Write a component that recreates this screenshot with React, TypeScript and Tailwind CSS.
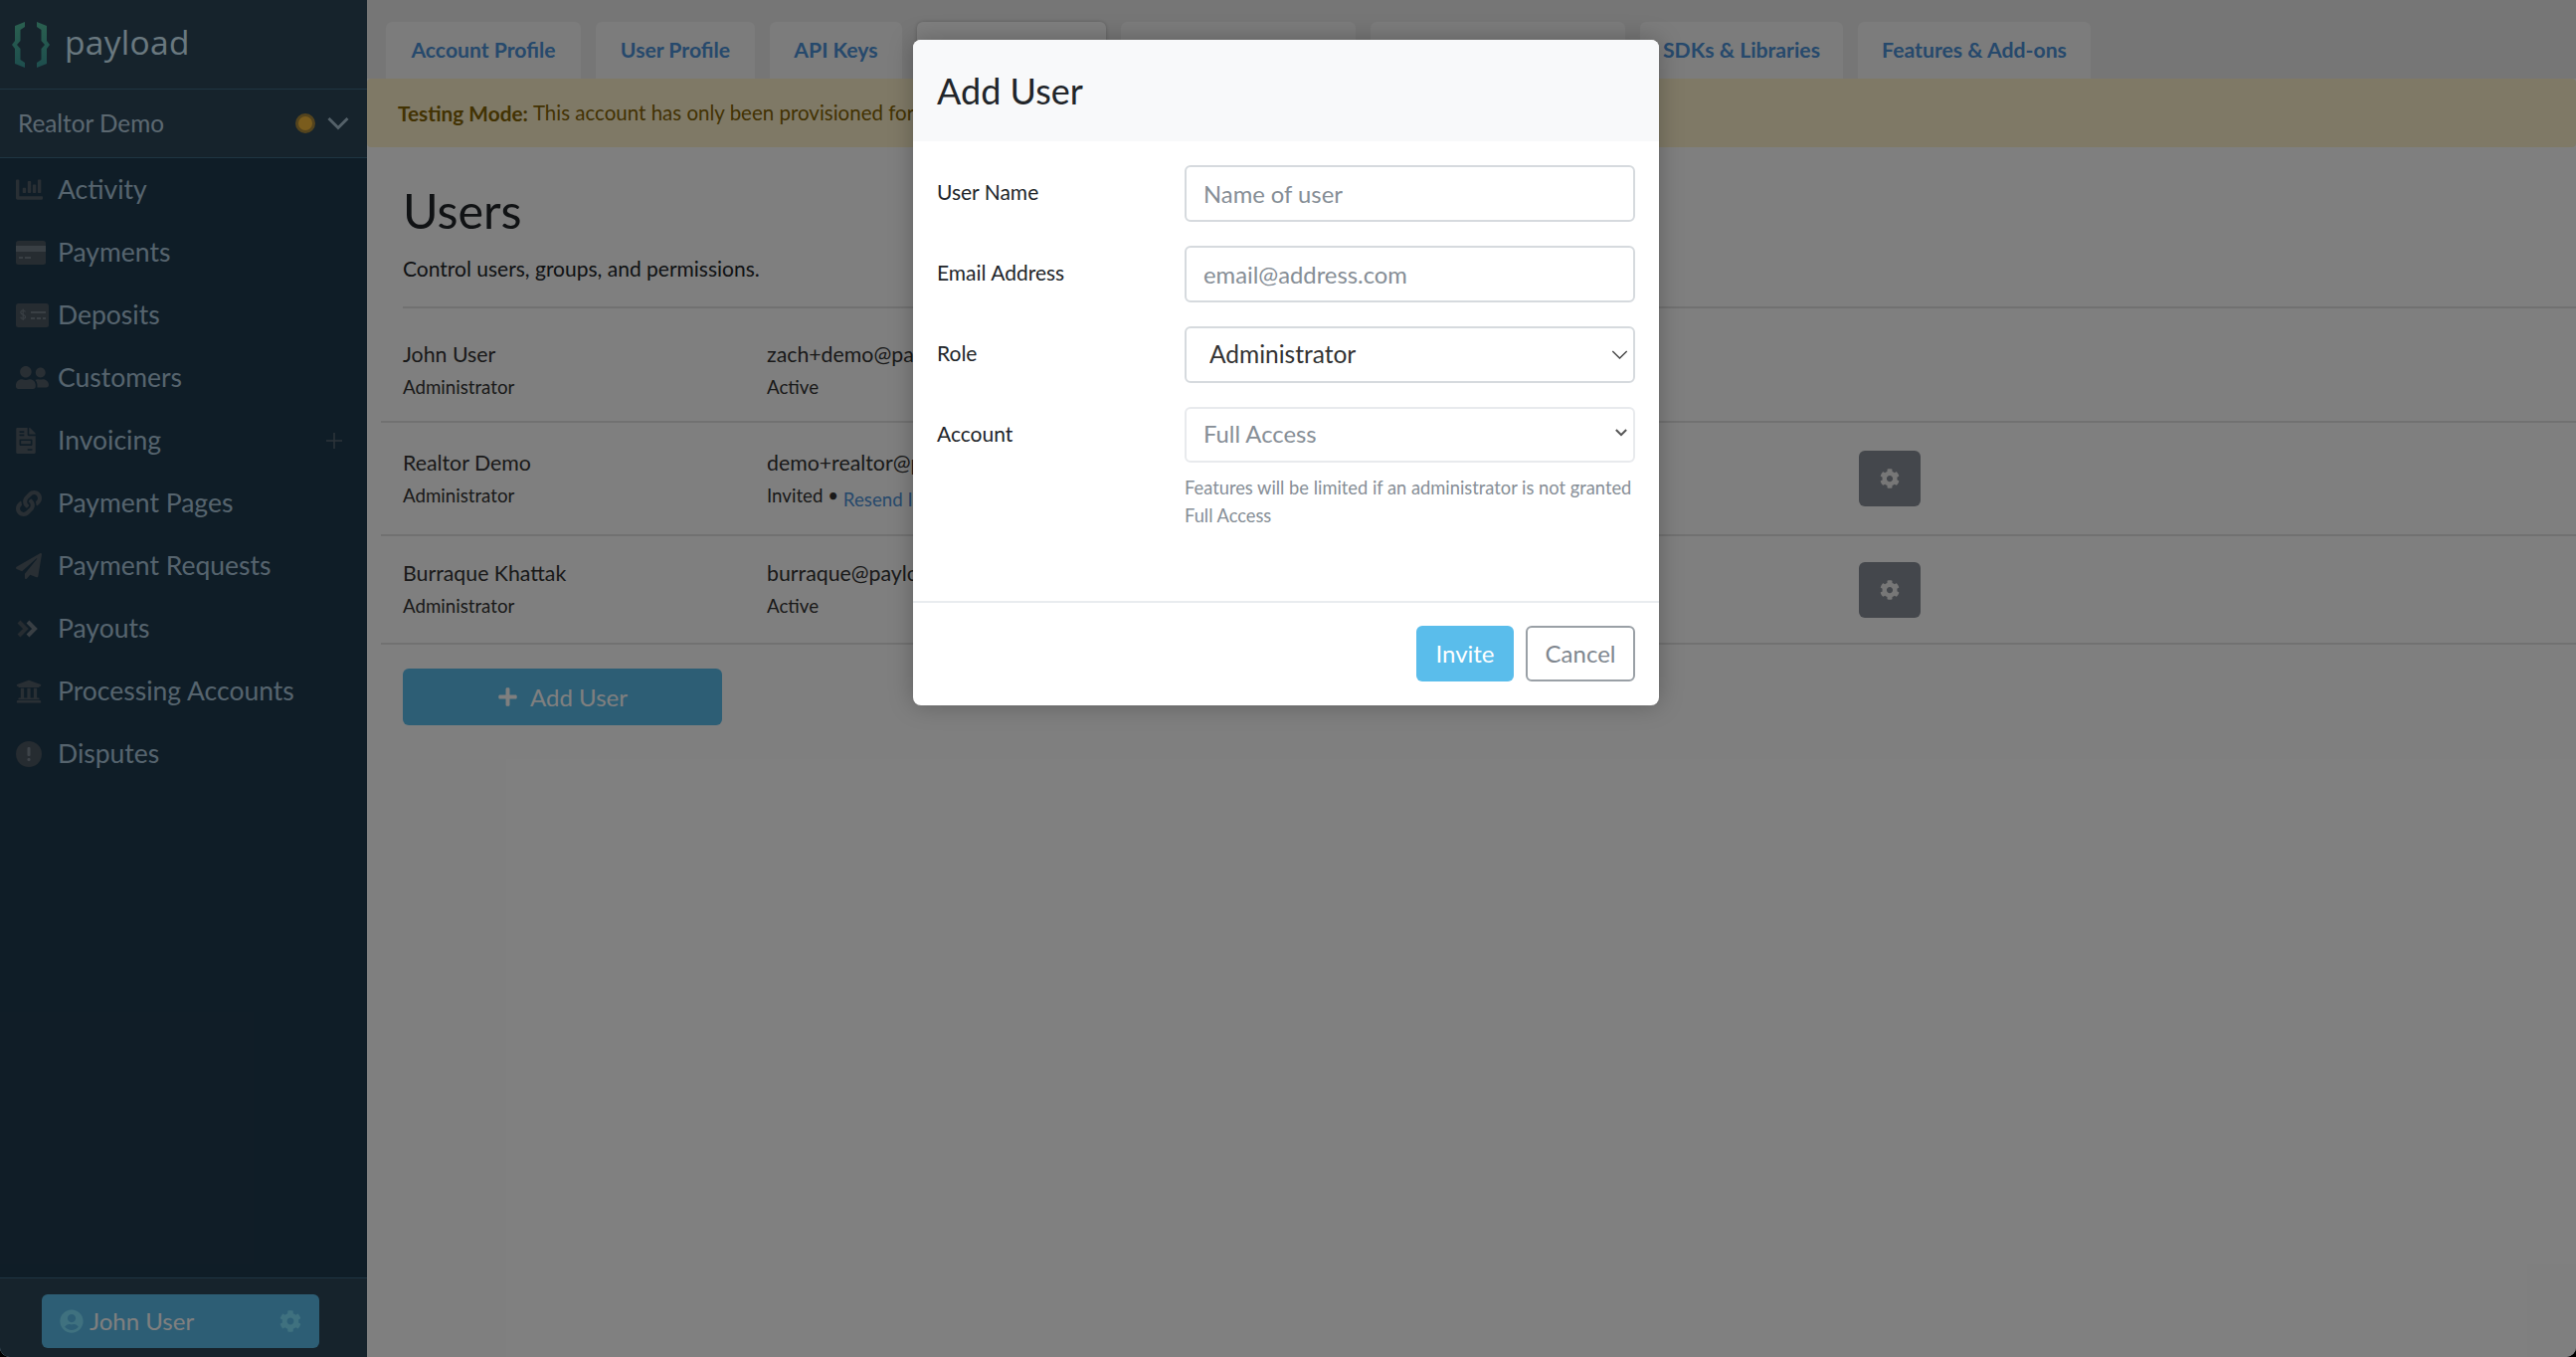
import { FaChartBar, FaUserFriends, FaFileInvoice, FaLink, FaPaperPlane, FaUniversity, FaCog, FaPlus, FaUserCircle } from "react-icons/fa";
import type { ReactNode } from "react";

function Card({ className }: { className?: string }) {
  return (
    <svg viewBox="0 0 30 24" className={className}>
      <rect width="30" height="24" rx="2.500" fill="#4c5862" />
      <rect y="5" width="30" height="6" fill="#727e88" />
      <rect x="3" y="16" width="4" height="2" fill="#727e88" />
      <rect x="9" y="16" width="6" height="2" fill="#727e88" />
    </svg>
  );
}

function Deposit({ className }: { className?: string }) {
  return (
    <svg viewBox="0 0 33 24" className={className}>
      <rect width="33" height="24" rx="2.500" fill="#4c5862" />
      <rect x="15" y="8" width="15" height="2" fill="#727e88" />
      <rect x="15" y="14" width="4" height="2" fill="#727e88" />
      <rect x="21" y="14" width="4" height="2" fill="#727e88" />
      <rect x="27" y="14" width="3" height="2" fill="#727e88" />
      <path d="M9.500 8.500C9 7.500 8 7 7 7 5.500 7 4.800 8 4.800 9c0 3 4.700 1.800 4.700 4.500 0 1.100-1 1.800-2.300 1.800-1.200 0-2.200-.6-2.600-1.600M7.200 5.500v11.500" fill="none" stroke="#727e88" strokeWidth="1.200" />
    </svg>
  );
}

function Payouts({ className }: { className?: string }) {
  return (
    <svg viewBox="0 0 22 18" className={className} fill="none" strokeWidth="4">
      <path d="M2 2l7 7-7 7" stroke="#4c5862" />
      <path d="M11 2l7 7-7 7" stroke="#727e88" />
    </svg>
  );
}

function Alert({ className }: { className?: string }) {
  return (
    <svg viewBox="0 0 26 26" className={className}>
      <circle cx="13" cy="13" r="13" fill="#4c5862" />
      <rect x="11.500" y="6" width="3" height="9" rx="1" fill="#7c8892" />
      <rect x="11.500" y="17" width="3" height="3" rx="1" fill="#7c8892" />
    </svg>
  );
}

const nav = [
  { label: "Activity", icon: <FaChartBar className="w-[27px] h-[27px]" /> },
  { label: "Payments", icon: <Card className="w-[30px] h-[24px]" /> },
  { label: "Deposits", icon: <Deposit className="w-[33px] h-[24px]" /> },
  { label: "Customers", icon: <FaUserFriends className="w-[33px] h-[27px]" /> },
  { label: "Invoicing", icon: <FaFileInvoice className="w-[20px] h-[26px]" />, plus: true },
  { label: "Payment Pages", icon: <FaLink className="w-[26px] h-[26px]" /> },
  { label: "Payment Requests", icon: <FaPaperPlane className="w-[26px] h-[26px]" /> },
  { label: "Payouts", icon: <Payouts className="w-[22px] h-[18px] ml-[1px]" /> },
  { label: "Processing Accounts", icon: <FaUniversity className="w-[26px] h-[26px]" /> },
  { label: "Disputes", icon: <Alert className="w-[26px] h-[26px]" /> },
];

const tabs = [
  { label: "Account Profile", cls: "w-[196px] h-[57px] bg-[#f8f8f8]" },
  { label: "User Profile", cls: "w-[160px] h-[57px] bg-[#f8f8f8]" },
  { label: "API Keys", cls: "w-[133px] h-[57px] bg-[#f8f8f8]" },
  { label: "", cls: "w-[190px] h-[57px] bg-white shadow-[0_0_4px_rgba(0,0,0,0.2)]" },
  { label: "", cls: "w-[236px] h-[57px] bg-[#f8f8f8]" },
  { label: "", cls: "w-[256px] h-[57px] bg-[#f8f8f8]" },
  { label: "SDKs & Libraries", cls: "w-[204px] h-[57px] bg-[#f8f8f8]" },
  { label: "Features & Add-ons", cls: "w-[234px] h-[57px] bg-[#f8f8f8]" },
];

function UserRow({ name, email, status, invite, gear, cls }: { name: string; email: string; status: string; invite?: boolean; gear?: boolean; cls: string }) {
  return (
    <div className={`flex items-center border-b-2 border-[#e2e2e2] pl-[22px] ${cls}`}>
      <div className="w-[366px] shrink-0">
        <div className="text-[21.300px] leading-[33px] text-[#333]">{name}</div>
        <div className="text-[18.700px] leading-[32px] text-[#333]">Administrator</div>
      </div>
      <div className="w-[1098px] shrink-0">
        <div className="text-[21.300px] leading-[33px] text-[#333]">{email}</div>
        <div className="text-[18.700px] leading-[32px] text-[#333]">
          {status}
          {invite && (
            <>
              {" "}
              • <span className="relative top-[4px] text-[#4d92d8]">Resend Invite</span>
            </>
          )}
        </div>
      </div>
      {gear && (
        <button className="w-[62px] h-[56px] rounded-[6px] bg-[#888e98] flex items-center justify-center text-[#eeeeee]">
          <FaCog className="w-[20px] h-[20px]" />
        </button>
      )}
    </div>
  );
}

const inputCls = "w-full h-[57px] border-2 border-[#d6dade] rounded-[6px] bg-white px-[17px] text-[23.800px] text-[#333] placeholder:text-[#868e96] outline-none";

function Field({ label, children }: { label: string; children: ReactNode }) {
  return (
    <div className="flex mb-[24px]">
      <label className="w-[249px] shrink-0 text-[21px] leading-[30px] pt-[12px] text-[#212529]">{label}</label>
      <div className="flex-1 min-w-0">{children}</div>
    </div>
  );
}

export default function App() {
  return (
    <div className="h-[1364px] w-[2590px] bg-black">
      <div className="relative h-full w-full overflow-hidden rounded-b-[10px] flex bg-white font-[Lato,sans-serif]">
        <aside className="w-[369px] shrink-0 flex flex-col bg-[#1f3a4e]">
          <div className="h-[90px] shrink-0 bg-[#2c4759] border-b border-[#3f6a85] flex items-center pl-[12px]">
            <svg viewBox="0 0 38 46" className="w-[38px] h-[46px]">
              <defs>
                <linearGradient id="brace" x1="0" y1="0" x2="0" y2="1">
                  <stop offset="0" stopColor="#55c0a0" />
                  <stop offset="1" stopColor="#3c9c9c" />
                </linearGradient>
              </defs>
              <path fill="url(#brace)" d="M13 0v5L8.500 8v11L5 23l3.500 4v11l4.500 3v5L3 42V27l-3-4 3-4V4zM25 0l10 4v15l3 4-3 4v15l-10 4v-5l4.500-3V27L33 23l-3.500-4V8L25 5z" />
            </svg>
            <span className="ml-[15px] text-[33.500px] leading-none text-[#d4f0ff] font-['Open_Sans'] tracking-[0.3px] relative bottom-[2px]">payload</span>
          </div>
          <div className="h-[69px] shrink-0 bg-[#2c4759] border-b border-[#3f6a85] flex items-center pl-[18px]">
            <span className="text-[24.300px] text-[#b8d0e0]">Realtor Demo</span>
            <span className="ml-auto w-[20px] h-[20px] rounded-full bg-[#f5b93a] border-[3px] border-[#a8883c] mr-[12px]" />
            <svg viewBox="0 0 22 14" className="w-[22px] h-[14px] mr-[18px] text-[#a9c2d2]" fill="none" stroke="currentColor" strokeWidth="3">
              <path d="M1.500 2 11 11.500 20.500 2" />
            </svg>
          </div>
          <nav className="flex flex-col">
            {nav.map((n) => (
              <div key={n.label} className="h-[63px] flex items-center">
                <div className="w-[58px] shrink-0 pl-[16px] flex items-center text-[#525e68]">{n.icon}</div>
                <span className="text-[26.500px] text-[#acc8dc]">{n.label}</span>
                {n.plus && (
                  <svg viewBox="0 0 16 16" className="ml-auto mr-[25px] w-[16px] h-[16px] text-[#5a6874]" fill="none" stroke="currentColor" strokeWidth="1.500">
                    <path d="M8 0v16M0 8h16" />
                  </svg>
                )}
              </div>
            ))}
          </nav>
          <div className="mt-auto h-[80px] bg-[#2c4759] border-t border-[#3f6a85] pt-[16px] pl-[42px]">
            <div className="w-[279px] h-[54px] rounded-[6px] bg-[#5abdeb] flex items-center pl-[18px] pr-[18px] text-white">
              <FaUserCircle className="w-[24px] h-[24px] text-[#7ee2ff]" />
              <span className="ml-[6px] text-[24px]">John User</span>
              <FaCog className="ml-auto w-[22px] h-[22px] text-[#7ee2ff]" />
            </div>
          </div>
        </aside>

        <main className="flex-1 min-w-0 flex flex-col">
          <div className="h-[79px] shrink-0 bg-[#ededed] pt-[22px] pl-[19px] flex gap-[15px]">
            {tabs.map((t, i) => (
              <div key={i} className={`${t.cls} shrink-0 rounded-t-[6px] flex items-center justify-center text-[21.200px] font-bold text-[#4d92d8]`}>
                {t.label}
              </div>
            ))}
          </div>
          <div className="h-[69px] shrink-0 bg-[#fff3cd] rounded-[4px] flex items-center pl-[31px] text-[20.500px] text-[#856404]">
            <strong className="font-bold text-[20.800px] mr-[5px]">Testing Mode:</strong> This account has only been provisioned for testing.
          </div>
          <div className="pl-[36px]">
            <h1 className="text-[48.500px] leading-[56px] mt-[35px] text-[#212529]">Users</h1>
            <p className="text-[21px] leading-[30px] mt-[16px] text-[#212529]">Control users, groups, and permissions.</p>
          </div>
          <div className="ml-[36px] mt-[23px] border-b-2 border-[#e2e2e2]" />
          <div className="ml-[14px]">
            <UserRow name="John User" email="zach+demo@payload.com" status="Active" cls="h-[115px] pt-[11px]" />
            <UserRow name="Realtor Demo" email="demo+realtor@payload.com" status="Invited" invite gear cls="h-[114px]" />
            <UserRow name="Burraque Khattak" email="burraque@payload.com" status="Active" gear cls="h-[109px]" />
          </div>
          <button className="ml-[36px] mt-[24px] w-[321px] h-[57px] rounded-[6px] bg-[#5abdeb] flex items-center justify-center text-white text-[24px]">
            <FaPlus className="w-[21px] h-[21px] mr-[12px]" />
            Add User
          </button>
        </main>

        <div className="absolute inset-0 bg-black/50" />

        <div className="absolute left-[918px] top-[40px] w-[750px] h-[669px] rounded-[8px] bg-white shadow-[0_0_24px_rgba(0,0,0,0.25)] flex flex-col overflow-hidden">
          <div className="h-[102px] shrink-0 bg-[#f8f9fa] flex items-center pl-[24px]">
            <h2 className="text-[36px] text-[#212529]">Add User</h2>
          </div>
          <div className="flex-1 pl-[24px] pr-[24px] pt-[24px]">
            <Field label="User Name">
              <input placeholder="Name of user" className={inputCls} />
            </Field>
            <Field label="Email Address">
              <input placeholder="email@address.com" className={inputCls} />
            </Field>
            <Field label="Role">
              <div className="relative">
                <select defaultValue="Administrator" className="w-full h-[57px] appearance-none border-2 border-[#d6dade] rounded-[6px] bg-white pl-[23px] text-[24.500px] text-[#333] outline-none">
                  <option>Administrator</option>
                </select>
                <svg viewBox="0 0 18 10" className="absolute right-[7px] top-[24px] w-[17px] h-[9px] text-[#444]" fill="none" stroke="currentColor" strokeWidth="1.500">
                  <path d="M1 1l8 8 8-8" />
                </svg>
              </div>
            </Field>
            <Field label="Account">
              <div className="relative">
                <select defaultValue="Full Access" className="w-full h-[56px] appearance-none border-2 border-[#e8eaed] rounded-[6px] bg-white pl-[17px] text-[23.800px] text-[#868e96] outline-none">
                  <option>Full Access</option>
                </select>
                <svg viewBox="0 0 14 9" className="absolute right-[8px] top-[22px] w-[12px] h-[8px] text-[#555]" fill="none" stroke="currentColor" strokeWidth="2.400">
                  <path d="M1 1l6 6 6-6" />
                </svg>
              </div>
              <p className="mt-[11px] text-[18.300px] leading-[28px] text-[#868e96]">
                Features will be limited if an administrator is not granted Full Access
              </p>
            </Field>
          </div>
          <div className="h-[105px] shrink-0 border-t-2 border-[#e9ecef] flex items-start justify-end gap-[12px] pt-[23px] pr-[24px]">
            <button className="w-[98px] h-[56px] rounded-[6px] bg-[#5abdeb] text-white text-[24px]">Invite</button>
            <button className="w-[110px] h-[56px] rounded-[6px] border-2 border-[#9aa0a6] text-[#7f878f] text-[24px]">Cancel</button>
          </div>
        </div>
      </div>
    </div>
  );
}
